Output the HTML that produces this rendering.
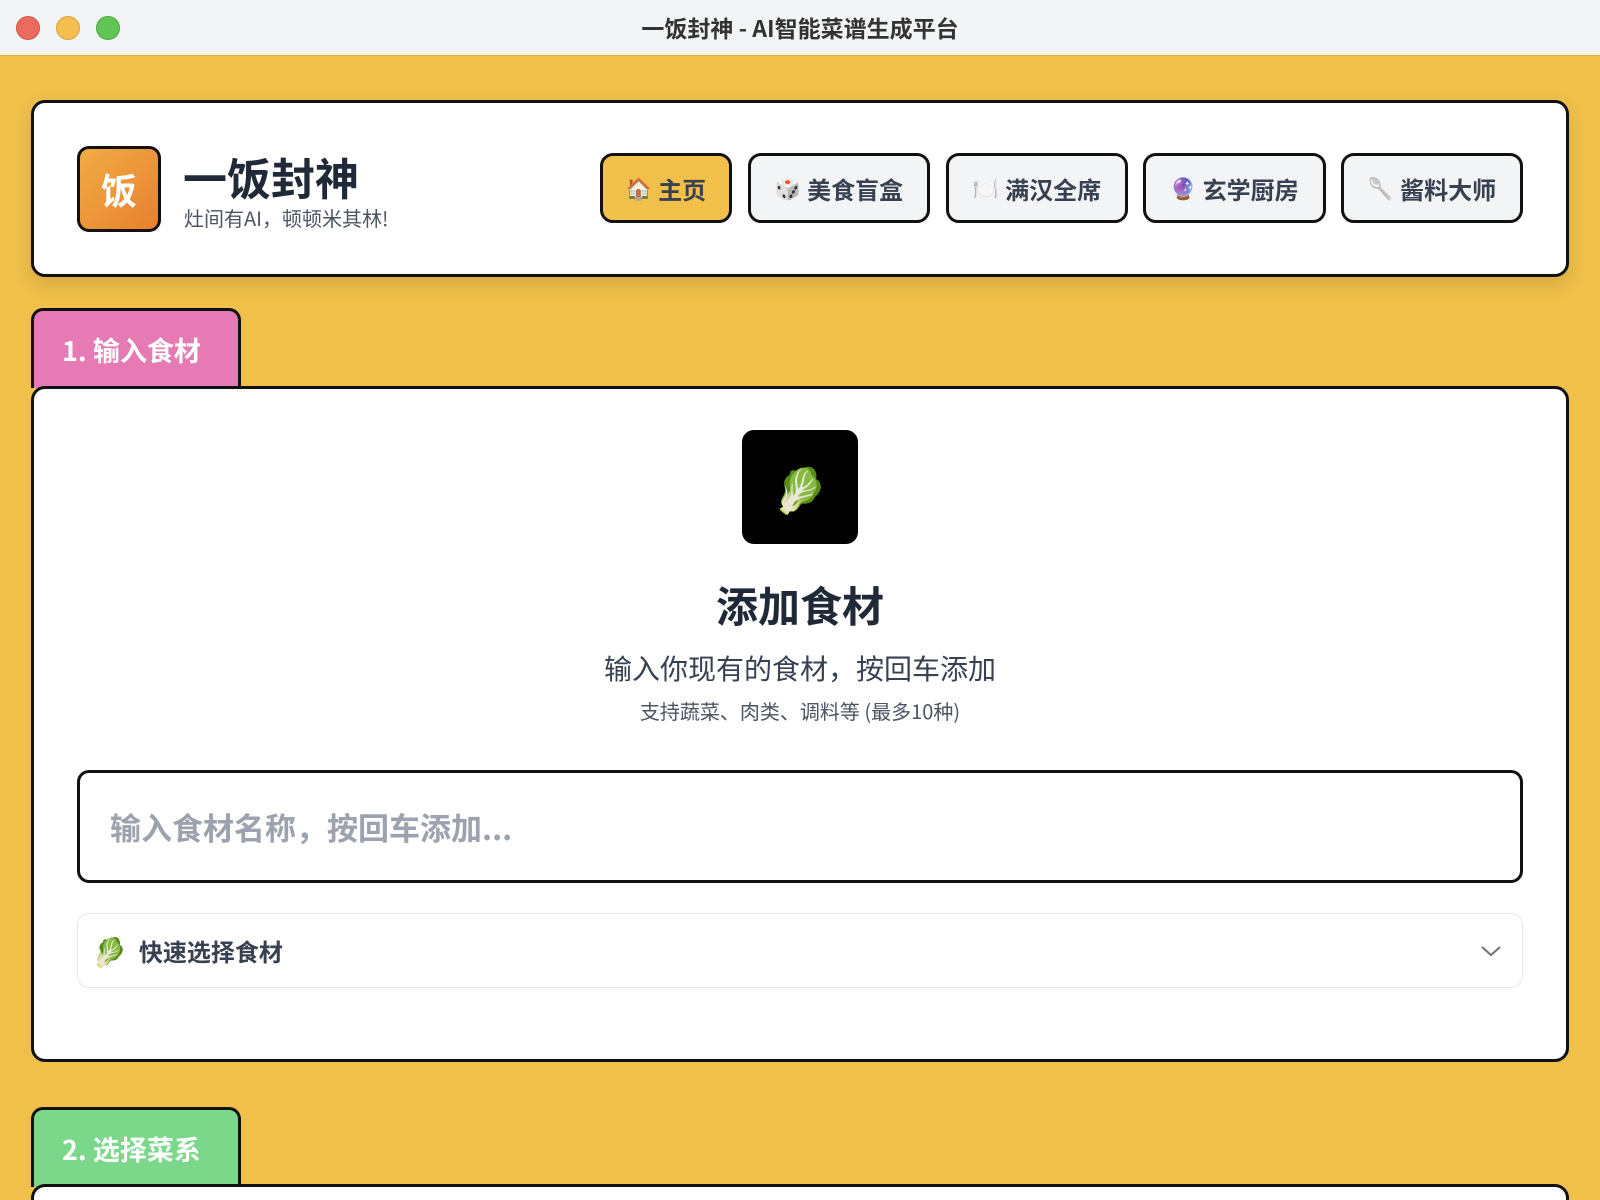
<!DOCTYPE html>
<html style="width:1600px;height:1200px;overflow:hidden"><head><meta charset="utf-8"><style>
*{box-sizing:border-box;margin:0;padding:0}
body{width:1600px;height:1200px;overflow:hidden;background:#f0c04b;font-family:"Noto Sans CJK SC","Liberation Sans",sans-serif;position:relative;color:#1f2937}
.tb{position:absolute;left:0;top:0;width:1600px;height:56px;background:#f3f4f6;border-bottom:1px solid #d9b24a;text-align:center;line-height:54px;font-size:23px;font-weight:700;color:#333}
.dot{position:absolute;top:16px;width:24px;height:24px;border-radius:50%}
.card{position:absolute;background:#fff;border:3px solid #111;border-radius:14px}
.abs{position:absolute}
.nav{position:absolute;top:153px;height:70px;border:3px solid #111;border-radius:13px;background:#f3f4f6;font-size:24px;font-weight:700;color:#374151;display:flex;align-items:center;justify-content:center;gap:6px}
.nav span{font-size:21px}
.tab{position:absolute;left:31px;width:210px;border:3px solid #111;border-bottom:none;border-radius:12px 12px 0 0;color:#fff;font-size:27px;font-weight:700;padding-left:28px;display:flex;align-items:center}
</style></head><body>
<div class="tb">一饭封神 - AI智能菜谱生成平台</div>
<div class="dot" style="left:16px;background:#ed6a5e;border:1px solid #d05548"></div>
<div class="dot" style="left:56px;background:#f5bf4f;border:1px solid #d6a03c"></div>
<div class="dot" style="left:96px;background:#61c554;border:1px solid #4ea73f"></div>

<div class="card" style="left:31px;top:100px;width:1538px;height:177px;box-shadow:0 8px 20px rgba(0,0,0,.12)"></div>
<div class="abs" style="left:77px;top:146px;width:84px;height:86px;border:3px solid #111;border-radius:12px;background:linear-gradient(135deg,#f0ac45,#e8802f);color:#fff;font-size:36px;font-weight:700;display:flex;align-items:center;justify-content:center">饭</div>
<div class="abs" style="left:183px;top:148px;font-size:44px;font-weight:700;color:#1f2937;line-height:56px">一饭封神</div>
<div class="abs" style="left:184px;top:204px;font-size:20px;color:#4b5563;line-height:28px">灶间有AI，顿顿米其林!</div>

<div class="nav" style="left:600px;width:132px;background:#f0c04b"><span>🏠</span>主页</div>
<div class="nav" style="left:748px;width:182px"><span>🎲</span>美食盲盒</div>
<div class="nav" style="left:946px;width:182px"><span>🍽️</span>满汉全席</div>
<div class="nav" style="left:1143px;width:183px"><span>🔮</span>玄学厨房</div>
<div class="nav" style="left:1341px;width:182px"><span>🥄</span>酱料大师</div>

<div class="tab" style="top:308px;height:80px;background:#e57ab5">1. 输入食材</div>
<div class="card" style="left:31px;top:386px;width:1538px;height:676px"></div>
<div class="abs" style="left:742px;top:430px;width:116px;height:114px;background:#000;border-radius:12px;display:flex;align-items:center;justify-content:center;font-size:44px">🥬</div>
<div class="abs" style="left:0;width:1600px;top:576px;text-align:center;font-size:42px;font-weight:700;color:#1f2937;line-height:58px">添加食材</div>
<div class="abs" style="left:0;width:1600px;top:648px;text-align:center;font-size:28px;color:#374151;line-height:40px">输入你现有的食材，按回车添加</div>
<div class="abs" style="left:0;width:1600px;top:696px;text-align:center;font-size:20px;color:#4b5563;line-height:30px">支持蔬菜、肉类、调料等 (最多10种)</div>
<div class="abs" style="left:77px;top:770px;width:1446px;height:113px;border:3px solid #111;border-radius:12px;padding-left:30px;display:flex;align-items:center;font-size:31px;font-weight:700;color:#9ca3af">输入食材名称，按回车添加...</div>
<div class="abs" style="left:77px;top:913px;width:1446px;height:75px;border:1px solid #e5e7eb;border-radius:12px;padding-left:14px;display:flex;align-items:center;font-size:24px;font-weight:700;color:#374151"><span style="font-size:28px;margin-right:12px">🥬</span>快速选择食材
<svg style="position:absolute;right:20px;top:30px" width="22" height="14" viewBox="0 0 22 14"><path d="M2 3l9 8 9-8" fill="none" stroke="#6b7280" stroke-width="2"/></svg></div>

<div class="tab" style="top:1107px;height:80px;background:#7bd88a">2. 选择菜系</div>
<div class="card" style="left:31px;top:1184px;width:1538px;height:16px;border-bottom:none;border-radius:14px 14px 0 0"></div>
</body></html>
